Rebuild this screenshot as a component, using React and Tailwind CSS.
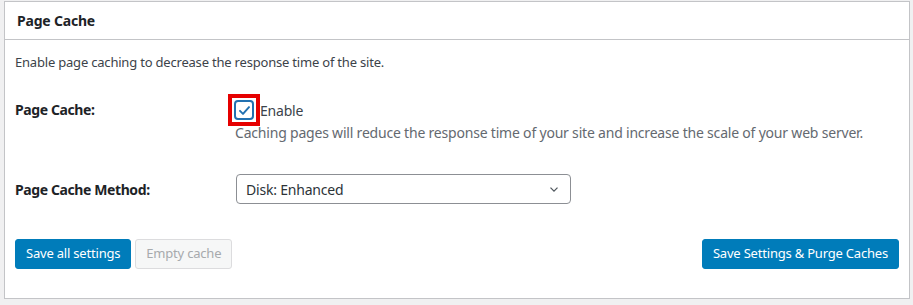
import React from "react";

export default function App() {
  return (
    <div className="w-[913px] h-[305px] bg-[#f0f0f1] pt-px pl-[4px] pr-[3px] text-[#3c434a] tracking-[-0.2px]" style={{ fontFamily: '"Noto Sans", sans-serif' }}>
      <div className="h-[298px] border border-[#c3c4c7] bg-white flex flex-col">
        <div className="h-[38px] border-b border-[#c3c4c7] flex items-center pl-[12px]">
          <h2 className="text-[14px] font-bold text-[#1d2327]">Page Cache</h2>
        </div>
        <div className="pl-[10px] pr-[10px] flex flex-col">
          <p className="text-[13px] mt-[12px] h-[20px] leading-[20px]">Enable page caching to decrease the response time of the site.</p>
          <div className="flex items-center mt-[22px]">
            <div className="w-[213px] text-[14px] font-bold text-[#1d2327] leading-[20px] tracking-[-0.4px]">Page Cache:</div>
            <span className="border-[4px] border-[#e60000] p-[2px] bg-white flex">
              <span className="w-[20px] h-[20px] border-2 border-[#2271b1] rounded-[4px] flex items-center justify-center">
                <svg width="15" height="15" viewBox="0 0 20 20"><path d="M4 10.5l4 4 8-9" fill="none" stroke="#2271b1" strokeWidth="2.6" strokeLinecap="round" strokeLinejoin="round" /></svg>
              </span>
            </span>
            <span className="text-[14px] mt-px">Enable</span>
          </div>
          <p className="text-[14px] text-[#646970] ml-[220px] mt-[-3px] leading-[20px]">Caching pages will reduce the response time of your site and increase the scale of your web server.</p>
          <div className="flex items-center mt-[31px]">
            <div className="w-[221px] text-[14px] font-bold text-[#1d2327] tracking-[-0.4px]">Page Cache Method:</div>
            <div className="w-[335px] h-[30px] border border-[#8c8f94] rounded-[4px] flex items-center justify-between pl-[9px] pr-[9px] text-[14px] text-[#2c3338]">
              <span>Disk: Enhanced</span>
              <svg width="14" height="14" viewBox="0 0 20 20"><path d="M5 8l5 5 5-5" fill="none" stroke="#50575e" strokeWidth="1.8" /></svg>
            </div>
          </div>
          <div className="flex items-center justify-between mt-[35px]">
            <div className="flex gap-[4px]">
              <button className="h-[30px] px-[10px] bg-[#007cba] text-white text-[13px] rounded-[3px] border border-[#007cba]">Save all settings</button>
              <button className="h-[30px] px-[10px] bg-[#f6f7f7] text-[#a7aaad] text-[13px] rounded-[3px] border border-[#dcdcde]">Empty cache</button>
            </div>
            <button className="h-[30px] px-[10px] bg-[#007cba] text-white text-[13px] rounded-[3px] border border-[#007cba]">Save Settings &amp; Purge Caches</button>
          </div>
        </div>
      </div>
    </div>
  );
}
